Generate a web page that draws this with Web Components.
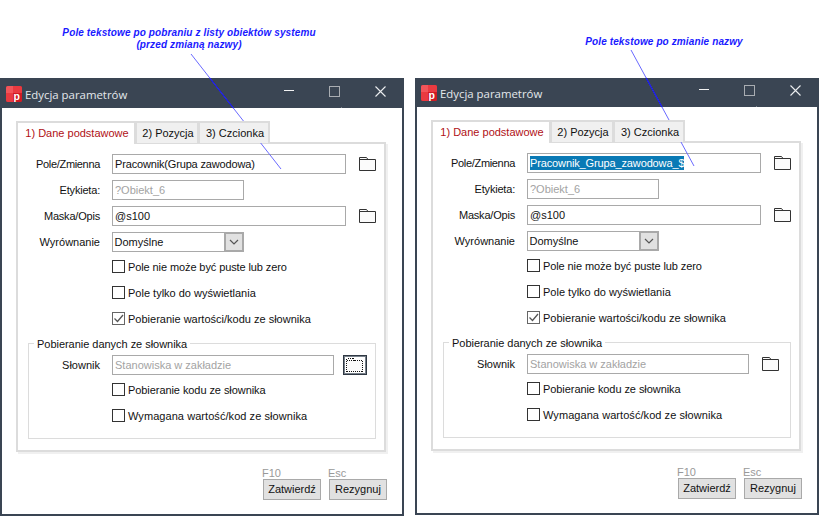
<!doctype html>
<html lang="pl"><head><meta charset="utf-8"><title>Edycja parametrów</title>
<style>html,body{margin:0;padding:0;background:#fff}</style></head>
<body>
<doc-canvas>
  <note-label style="left:0;top:27px;width:378px">Pole tekstowe po pobraniu z listy obiektów systemu<br>(przed zmianą nazwy)</note-label>
  <note-label style="left:475px;top:36px;width:378px">Pole tekstowe po zmianie nazwy</note-label>

  <param-window style="left:0;top:78px;height:438px" title-h="30" title-pad="8">
    <field-row label="Pole/Zmienna" ls="-.33"><text-box w="234" style="letter-spacing:-.16px">Pracownik(Grupa zawodowa)</text-box><folder-btn></folder-btn></field-row>
    <field-row label="Etykieta:" ls="-.2"><text-box w="132" off>?Obiekt_6</text-box></field-row>
    <field-row label="Maska/Opis" ls="-.2"><text-box w="234">@s100</text-box><folder-btn></folder-btn></field-row>
    <field-row label="Wyrównanie"><combo-box>Domyślne</combo-box></field-row>
    <check-row first style="letter-spacing:-.1px">Pole nie może być puste lub zero</check-row>
    <check-row>Pole tylko do wyświetlania</check-row>
    <check-row checked>Pobieranie wartości/kodu ze słownika</check-row>
    <group-box label="Pobieranie danych ze słownika">
      <field-row label="Słownik" lw="71"><text-box w="222" off>Stanowiska w zakładzie</text-box><folder-btn focus></folder-btn></field-row>
      <check-row first style="letter-spacing:-.07px">Pobieranie kodu ze słownika</check-row>
      <check-row style="letter-spacing:.06px">Wymagana wartość/kod ze słownika</check-row>
    </group-box>
  </param-window>

  <param-window style="left:415px;top:78px;height:437px" title-h="29" title-pad="7">
    <field-row label="Pole/Zmienna" ls="-.33"><text-box w="234" style="letter-spacing:-.13px"><sel-text>Pracownik_Grupa_zawodowa_$</sel-text></text-box><folder-btn></folder-btn></field-row>
    <field-row label="Etykieta:" ls="-.2"><text-box w="132" off>?Obiekt_6</text-box></field-row>
    <field-row label="Maska/Opis" ls="-.2"><text-box w="234">@s100</text-box><folder-btn></folder-btn></field-row>
    <field-row label="Wyrównanie"><combo-box>Domyślne</combo-box></field-row>
    <check-row first style="letter-spacing:-.1px">Pole nie może być puste lub zero</check-row>
    <check-row>Pole tylko do wyświetlania</check-row>
    <check-row checked>Pobieranie wartości/kodu ze słownika</check-row>
    <group-box label="Pobieranie danych ze słownika">
      <field-row label="Słownik" lw="71"><text-box w="222" off>Stanowiska w zakładzie</text-box><folder-btn></folder-btn></field-row>
      <check-row first style="letter-spacing:-.07px">Pobieranie kodu ze słownika</check-row>
      <check-row style="letter-spacing:.06px">Wymagana wartość/kod ze słownika</check-row>
    </group-box>
  </param-window>

  <lead-line x1="191" y1="54" x2="281" y2="169" dark-from="78" dark-to="108"></lead-line>
  <lead-line x1="631" y1="50" x2="694" y2="166" dark-from="78" dark-to="107"></lead-line>
</doc-canvas>

<script>
const FONT = '"Liberation Sans", Arial, sans-serif';
function def(name, css, html) {
  customElements.define(name, class extends HTMLElement {
    connectedCallback() {
      if (this.shadowRoot) return;
      const a = n => this.getAttribute(n);
      const r = this.attachShadow({ mode: 'open' });
      r.innerHTML = `<style>${typeof css === 'function' ? css(a, this) : css}</style>` + (typeof html === 'function' ? html(a, this) : html);
    }
  });
}
const folderPath = 'M.5 13.5V.5H7.5L9 2.5H16.5V13.5ZM.5 2.5H9';

def('doc-canvas', `:host{display:block;position:relative;width:820px;height:516px;overflow:hidden;font:11px ${FONT};color:#111}`, `<slot></slot>`);

def('note-label', `:host{display:block;position:absolute;text-align:center;font:italic bold 10px/12px ${FONT};color:#1a1aff;letter-spacing:.12px}`, `<slot></slot>`);

def('lead-line', `:host{display:block;position:absolute;left:0;top:0;width:820px;height:516px;pointer-events:none}svg{display:block}`,
  (a) => {
    const [x1, y1, x2, y2, f, t] = ['x1', 'y1', 'x2', 'y2', 'dark-from', 'dark-to'].map(n => +a(n));
    const at = y => x1 + (x2 - x1) * (y - y1) / (y2 - y1);
    return `<svg width="820" height="516" aria-hidden="true">
      <line x1="${x1}" y1="${y1}" x2="${x2}" y2="${y2}" stroke="#6a6aff" stroke-width="1"/>
      <line x1="${at(f)}" y1="${f}" x2="${at(t)}" y2="${t}" stroke="#1414f0" stroke-width="1.2"/>
    </svg>`;
  });

def('param-window', (a) => `
  :host{display:flex;flex-direction:column;position:absolute;box-sizing:border-box;width:404px;background:#fff;border:2px solid #3a4553;border-top:0;--ind:94px;--first:2px}
  .body{display:flex;flex-direction:column;flex:1;padding:13px 15px 0 14px}
  .foot{display:flex;justify-content:flex-end;gap:8px;margin-top:14px}
`, (a) => `
  <win-title pad="${a('title-pad')}" h="${a('title-h')}">Edycja parametrów</win-title>
  <div class="body">
    <tab-strip></tab-strip>
    <tab-panel><slot></slot></tab-panel>
    <div class="foot">
      <cmd-btn hint="F10">Zatwierdź</cmd-btn>
      <cmd-btn hint="Esc">Rezygnuj</cmd-btn>
    </div>
  </div>`);

def('win-title', (a) => `
  :host{display:flex;position:relative;box-sizing:border-box;height:${a('h')}px;margin:0 -2px;padding:${a('pad')}px 0 0 6px;background:#3a4553;color:#e4e8ec;font:11.4px/16px "Open Sans",sans-serif}
  .ic{width:16px;height:16px;flex:none}
  .t{margin-left:3px;flex:1;padding-top:1px}
  .c{display:flex;align-items:flex-start;padding-right:18px;gap:35px}
  .dot{position:absolute;left:341px;bottom:0;width:1px;height:1px;background:#7a828c}
  svg{display:block}
`, () => `
  <svg class="ic" viewBox="0 0 16 16" aria-hidden="true">
    <rect width="16" height="16" rx="2" fill="#e3262e"/>
    <path d="M2 0H7V7H0V2A2 2 0 0 1 2 0Z" fill="#f2555a"/>
    <path d="M7 0H14A2 2 0 0 1 16 2V7H7Z" fill="#ea3a40"/>
    <path d="M0 7H7V16H2A2 2 0 0 1 0 14Z" fill="#ea3a40"/>
    <path d="M7 7H16V14A2 2 0 0 1 14 16H7Z" fill="#cf1a24"/>
    <text x="7.6" y="13.6" font-family="Liberation Sans" font-weight="700" font-size="10.5" fill="#fff">p</text>
  </svg>
  <span class="t"><slot></slot></span>
  <span class="c">
    <svg width="10" height="10" aria-hidden="true"><path d="M0 4.5H10" stroke="#f2f2f2" stroke-width="1"/></svg>
    <svg width="11" height="11" aria-hidden="true"><rect x=".5" y=".5" width="10" height="10" fill="none" stroke="#a9adb2"/></svg>
    <svg width="11" height="11" aria-hidden="true"><path d="M.5 .5L10.5 10.5M10.5 .5L.5 10.5" stroke="#eceef0" stroke-width="1.1"/></svg>
  </span>
  <i class="dot"></i>`);

def('tab-strip', `
  :host{display:flex;height:22px;position:relative;z-index:1;margin-bottom:-1px}
  div{box-sizing:border-box;border:2px solid #dcdcdc;border-left-width:1px;border-bottom:0;background:#f0f0f0;display:flex;align-items:center;justify-content:center;height:22px;padding:0 0 1px 2px;color:#111}
  .a{width:120px;background:#fff;color:#b01016;border-left-width:2px;height:23px;padding-bottom:2px}
  .b{width:63px}.c{width:71px}
`, `<div class="a">1) Dane podstawowe</div><div class="b">2) Pozycja</div><div class="c">3) Czcionka</div>`);

def('tab-panel', `
  :host{display:flex;flex-direction:column;box-sizing:border-box;width:370px;height:310px;padding:10px 0 0;border:2px solid #dcdcdc;box-shadow:2px 2px 0 #f0f0f0}
`, `<slot></slot>`);

def('field-row', (a) => `
  :host{display:flex;align-items:center;height:20px;margin-bottom:6px}
  label{box-sizing:border-box;width:${a('lw') || 82}px;text-align:right;flex:none;margin-right:12px;color:#111;letter-spacing:${a('ls') || 0}px}
`, (a) => `<label>${a('label')}</label><slot></slot>`);

def('text-box', (a) => `
  :host{display:block;box-sizing:border-box;width:${a('w')}px;height:20px;border:1px solid #a9a9a9;padding:0 2px;line-height:18px;white-space:nowrap;background:#fff;color:${a('off') !== null ? '#a3a3a3' : '#111'}}
`, `<slot></slot>`);

def('sel-text', `:host{display:inline-block;background:#0a7ab5;color:#fff;line-height:14px;vertical-align:top;margin-top:2px}`, `<slot></slot>`);

def('folder-btn', (a) => a('focus') !== null ? `
  :host{display:flex;align-items:center;justify-content:center;box-sizing:border-box;width:24px;height:20px;margin-left:9px;border:1px solid #2f3843;box-shadow:inset 0 0 0 1px #78818b;background:#fff}
  svg{display:block}
` : `
  :host{display:flex;box-sizing:border-box;margin-left:13px;width:17px}
  svg{display:block}
`, (a) => a('focus') !== null
  ? `<svg width="18" height="14" aria-hidden="true" shape-rendering="crispEdges"><path d="${folderPath}" fill="#fbfbfb" stroke="#111" stroke-dasharray="1 1"/></svg>`
  : `<svg width="17" height="14" aria-hidden="true"><path d="${folderPath}" fill="#fbfbfb" stroke="#333"/></svg>`);

def('combo-box', `
  :host{display:flex;box-sizing:border-box;width:132px;height:20px;border:1px solid #a9a9a9;line-height:18px;color:#111;background:#fff}
  .t{flex:1;padding-left:1.5px}
  .b{box-sizing:border-box;width:20px;height:20px;margin:-1px -1px 0 0;border:2px solid #a9a9a9;background:#e1e1e1;display:flex;align-items:center;justify-content:center}
  svg{display:block}
`, `<span class="t"><slot></slot></span><span class="b"><svg width="10" height="6" aria-hidden="true"><path d="M1 1L5 5L9 1" fill="none" stroke="#555" stroke-width="1.2"/></svg></span>`);

def('check-row', (a) => `
  :host{display:flex;align-items:center;height:13px;margin:${a('first') !== null ? 'var(--first)' : '13px'} 0 0 var(--ind)}
  i{display:block;box-sizing:border-box;width:13px;height:13px;border:1px solid ${a('checked') !== null ? '#666' : '#333'};background:#fff;flex:none;margin-right:3px}
  svg{display:block}
`, (a) => `<i>${a('checked') !== null ? '<svg width="11" height="11" aria-hidden="true"><path d="M1.5 5.5L4.5 8.5L10 2" fill="none" stroke="#555" stroke-width="1.3"/></svg>' : ''}</i><span><slot></slot></span>`);

def('group-box', `
  :host{display:block;position:relative;box-sizing:border-box;width:348px;height:96px;margin:18px 0 0 10px;padding:11px 0 0;border:1px solid #dcdcdc;--ind:83px;--first:8px}
  .l{position:absolute;left:5px;top:-7px;padding:0 3px;background:#fff;line-height:14px;color:#111;letter-spacing:-.03px}
`, (a) => `<span class="l">${a('label')}</span><slot></slot>`);

def('cmd-btn', (a) => `
  :host{display:flex;flex-direction:column;width:58px}
  .h{color:#999;line-height:15px;height:13px;margin-left:-1px}
  .b{box-sizing:border-box;height:21px;border:1px solid #a9a9a9;background:#e1e1e1;color:#111;text-align:center;line-height:19px}
`, (a) => `<span class="h">${a('hint')}</span><span class="b"><slot></slot></span>`);
</script>
</body></html>
